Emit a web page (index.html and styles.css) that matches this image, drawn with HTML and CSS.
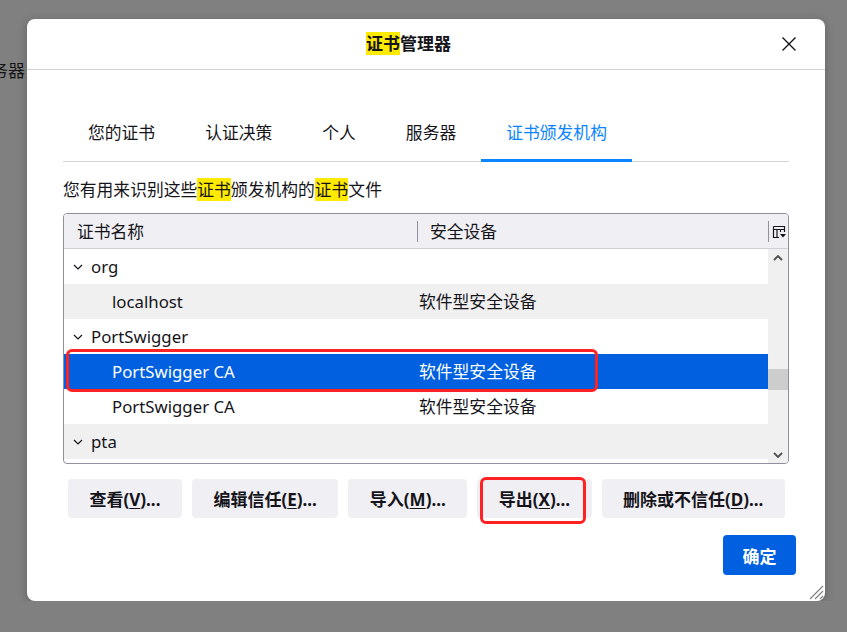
FILE: index.html
```html
<!DOCTYPE html>
<html lang="zh">
<head>
  <meta charset="UTF-8" />
  <title>证书管理器</title>
  <link rel="stylesheet" href="styles.css">
</head>
<body>
  <div class="page-behind">服务器</div>

  <div class="dialog">
    <div class="dialog-head">
      <div class="dialog-title"><mark>证书</mark>管理器</div>
      <button class="close-btn" aria-label="关闭">
        <svg width="16" height="16" viewBox="0 0 16 16"><path d="M1.5 1.5 L14.5 14.5 M14.5 1.5 L1.5 14.5" stroke="#15141a" stroke-width="1.4" fill="none"/></svg>
      </button>
    </div>

    <div class="dialog-body">
      <div class="tabs">
        <div class="tab">您的证书</div>
        <div class="tab">认证决策</div>
        <div class="tab">个人</div>
        <div class="tab">服务器</div>
        <div class="tab active">证书颁发机构</div>
      </div>

      <p class="desc">您有用来识别这些<mark>证书</mark>颁发机构的<mark>证书</mark>文件</p>

      <div class="tree">
        <div class="tree-head">
          <div class="col-name">证书名称</div>
          <div class="col-sep"></div>
          <div class="col-dev">安全设备</div>
          <div class="col-sep"></div>
          <div class="col-pick">
            <svg width="14" height="14" viewBox="0 0 14 14">
              <path d="M1.5 1.5 H12.5 V7 M1.5 1.5 V12.5 H7 M1.5 4.5 H12.5 M5 4.5 V12.5 M8.5 4.5 V7" stroke="#15141a" stroke-width="1.2" fill="none"/>
              <path d="M8 9 H14 L11 12.5 Z" fill="#15141a"/>
            </svg>
          </div>
        </div>

        <div class="tree-body">
          <div class="rows">
            <div class="row">
              <div class="cell group"><svg class="twisty" width="10" height="6" viewBox="0 0 10 6"><path d="M1 1 L5 5 L9 1" stroke="#15141a" stroke-width="1.2" fill="none"/></svg>org</div>
              <div class="cell"></div>
            </div>
            <div class="row alt">
              <div class="cell child">localhost</div>
              <div class="cell">软件型安全设备</div>
            </div>
            <div class="row">
              <div class="cell group"><svg class="twisty" width="10" height="6" viewBox="0 0 10 6"><path d="M1 1 L5 5 L9 1" stroke="#15141a" stroke-width="1.2" fill="none"/></svg>PortSwigger</div>
              <div class="cell"></div>
            </div>
            <div class="row selected">
              <div class="cell child">PortSwigger CA</div>
              <div class="cell">软件型安全设备</div>
            </div>
            <div class="row">
              <div class="cell child">PortSwigger CA</div>
              <div class="cell">软件型安全设备</div>
            </div>
            <div class="row alt">
              <div class="cell group"><svg class="twisty" width="10" height="6" viewBox="0 0 10 6"><path d="M1 1 L5 5 L9 1" stroke="#15141a" stroke-width="1.2" fill="none"/></svg>pta</div>
              <div class="cell"></div>
            </div>
          </div>

          <div class="scrollbar">
            <div class="sb-arrow">
              <svg width="10" height="6" viewBox="0 0 10 6"><path d="M1 5 L5 1 L9 5" stroke="#505050" stroke-width="1.8" fill="none"/></svg>
            </div>
            <div class="sb-track"><div class="sb-thumb"></div></div>
            <div class="sb-arrow">
              <svg width="10" height="6" viewBox="0 0 10 6"><path d="M1 1 L5 5 L9 1" stroke="#505050" stroke-width="1.8" fill="none"/></svg>
            </div>
          </div>
        </div>

        <!-- 标注框 -->
        <div class="mark-box row-mark"></div>
      </div>

      <div class="actions">
        <button class="btn">查看(<u>V</u>)...</button>
        <button class="btn">编辑信任(<u>E</u>)...</button>
        <button class="btn">导入(<u>M</u>)...</button>
        <button class="btn btn-export">导出(<u>X</u>)...<span class="mark-box btn-mark"></span></button>
        <button class="btn">删除或不信任(<u>D</u>)...</button>
      </div>

      <div class="footer">
        <button class="btn primary">确定</button>
      </div>
    </div>

    <svg class="grip" width="18" height="18" viewBox="0 0 18 18">
      <path d="M17 4 L4 17 M17 9 L9 17 M17 14 L14 17" stroke="#808080" stroke-width="1.2" fill="none"/>
    </svg>
  </div>
</body>
</html>
```

FILE: styles.css
```css
body {
  margin: 0;
  background: #808080;
  font-family: "Noto Sans", "Noto Sans CJK SC", sans-serif;
  color: #15141a;
  overflow: hidden;
}

button {
  font-family: inherit;
}

mark {
  background: #ffea00;
  color: inherit;
}

/* 后面页面露出的文字 */
.page-behind {
  position: absolute;
  left: -26px;
  top: 59px;
  font-size: 17px;
  line-height: 24px;
  color: #141414;
}

/* 对话框 */
.dialog {
  position: relative;
  margin: 19px 0 0 27px;
  width: 798px;
  height: 582px;
  background: #fff;
  border-radius: 8px;
  box-shadow: 0 2px 10px rgba(0, 0, 0, 0.25);
  box-sizing: border-box;
}

.dialog-head {
  height: 50px;
  border-bottom: 1px solid #d4d4d8;
  display: flex;
  align-items: center;
  justify-content: center;
  padding-right: 35px;
}

.dialog-title {
  font-size: 17px;
  font-weight: bold;
  line-height: 22px;
}

.close-btn {
  position: absolute;
  top: 17px;
  right: 28px;
  width: 16px;
  height: 16px;
  padding: 0;
  border: 0;
  background: none;
  display: flex;
}

.dialog-body {
  padding: 0 36px;
}

/* 标签页 */
.tabs {
  display: flex;
  margin-top: 35px;
  border-bottom: 1px solid #d4d4d8;
}

.tab {
  padding: 16px 25px 13px;
  font-size: 16.8px;
  line-height: 24px;
  border-bottom: 3px solid transparent;
  margin-bottom: -1px;
}

.tab.active {
  color: #0a84ff;
  border-bottom-color: #0a84ff;
  padding-bottom: 14px;
  margin-bottom: -1px;
}

.desc {
  margin: 16px 0 11px;
  font-size: 16.8px;
  line-height: 24px;
}

/* 证书列表 */
.tree {
  position: relative;
  border: 1px solid #8f8f9d;
  border-radius: 4px;
  overflow: hidden;
  height: 251px;
  box-sizing: border-box;
}

.tree-head {
  height: 34px;
  background: #f0f0f4;
  border-bottom: 1px solid #cfcfd8;
  display: flex;
  align-items: center;
  font-size: 16.8px;
}

.col-name {
  width: 353px;
  padding-left: 13px;
  box-sizing: border-box;
}

.col-sep {
  width: 1px;
  height: 21px;
  background: #8f8f9d;
}

.col-dev {
  flex: 1;
  padding-left: 12px;
}

.col-pick {
  width: 19px;
  display: flex;
  justify-content: center;
  padding-top: 2px;
}

.tree-body {
  display: flex;
  height: 214px;
}

.rows {
  flex: 1;
}

.row {
  display: grid;
  grid-template-columns: 355px 1fr;
  height: 35px;
  line-height: 35px;
  font-size: 16.8px;
}

.row.alt {
  background: #f0f0f0;
}

.row.selected {
  background: #0060df;
  color: #fff;
}

.cell {
  white-space: nowrap;
}

.cell.group {
  display: flex;
  align-items: center;
  padding-left: 9px;
}

.twisty {
  margin-right: 8px;
}

.cell.child {
  padding-left: 48px;
}

/* 滚动条 */
.scrollbar {
  width: 20px;
  background: #f0f0f0;
  display: flex;
  flex-direction: column;
}

.sb-arrow {
  height: 17px;
  display: flex;
  align-items: center;
  justify-content: center;
}

.sb-track {
  flex: 1;
}

.sb-thumb {
  margin-top: 103px;
  height: 21px;
  background: #cdcdcd;
}

/* 红色标注 */
.mark-box {
  position: absolute;
  border: 3px solid #ff2222;
  border-radius: 6px;
  box-sizing: border-box;
  pointer-events: none;
}

.row-mark {
  left: 2px;
  top: 135px;
  width: 532px;
  height: 43px;
}

.btn-mark {
  left: 3px;
  top: -2px;
  width: 106px;
  height: 47px;
}

/* 按钮 */
.actions {
  display: flex;
  gap: 10px;
  margin: 15px 0 0 5px;
}

.btn {
  position: relative;
  height: 39px;
  padding: 0 21.5px;
  border: 0;
  border-radius: 4px;
  background: #f0f0f4;
  color: #15141a;
  font-size: 17px;
  font-weight: bold;
}

.btn u {
  text-underline-offset: 2px;
}

.footer {
  display: flex;
  justify-content: flex-end;
  margin: 17px -7px 0 0;
}

.btn.primary {
  width: 73px;
  height: 40px;
  padding: 0;
  background: #0060df;
  color: #fff;
}

.grip {
  position: absolute;
  right: 1px;
  bottom: 1px;
}
```
